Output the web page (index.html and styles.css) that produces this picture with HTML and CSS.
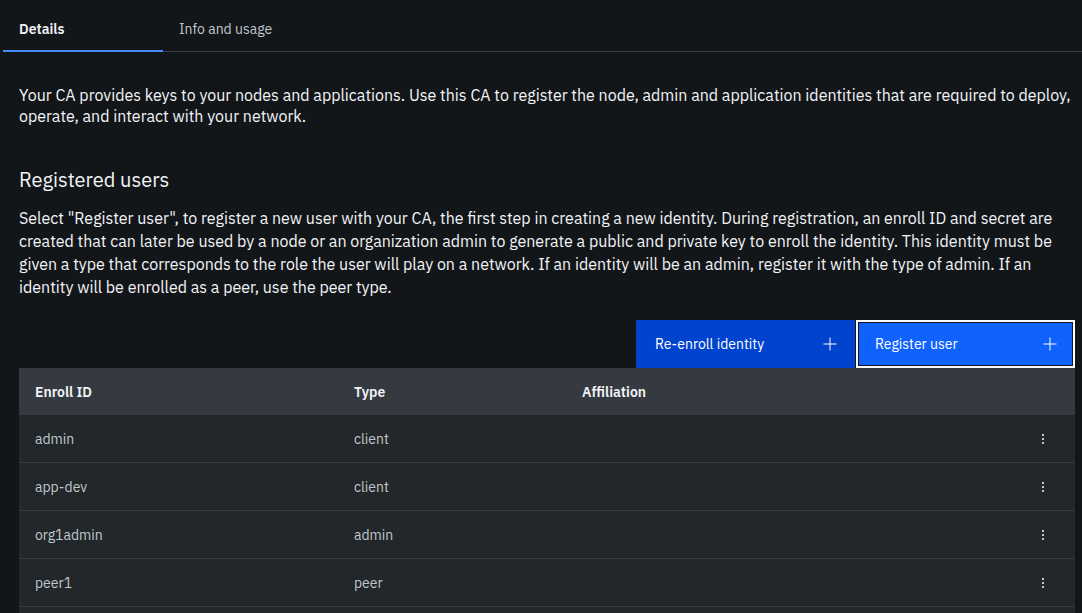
FILE: index.html
```html
<!DOCTYPE html>
<html lang="en">
<head>
<meta charset="utf-8">
<title>CA details</title>
<link rel="stylesheet" href="styles.css">
</head>
<body>
<div class="page">
  <nav class="tabs">
    <div class="tab tab-active">Details</div>
    <div class="tab">Info and usage</div>
    <div class="tab-rest"></div>
  </nav>
  <main class="content">
    <p class="intro">Your CA provides keys to your nodes and applications. Use this CA to register the node, admin and application identities that are required to deploy, operate, and interact with your network.</p>
    <h2 class="section-title">Registered users</h2>
    <p class="desc">Select "Register user", to register a new user with your CA, the first step in creating a new identity. During registration, an enroll ID and secret are created that can later be used by a node or an organization admin to generate a public and private key to enroll the identity. This identity must be given a type that corresponds to the role the user will play on a network. If an identity will be an admin, register it with the type of admin. If an identity will be enrolled as a peer, use the peer type.</p>
    <div class="toolbar">
      <button class="btn btn-secondary">Re-enroll identity
        <svg class="plus" viewBox="0 0 16 16" width="16" height="16"><path d="M8.5 1.5v6h6v1h-6v6h-1v-6h-6v-1h6v-6z" fill="currentColor"/></svg>
      </button>
      <button class="btn btn-primary">Register user
        <svg class="plus" viewBox="0 0 16 16" width="16" height="16"><path d="M8.5 1.5v6h6v1h-6v6h-1v-6h-6v-1h6v-6z" fill="currentColor"/></svg>
      </button>
    </div>
    <div class="table">
      <div class="row head">
        <div class="cell">Enroll ID</div>
        <div class="cell">Type</div>
        <div class="cell">Affiliation</div>
        <div class="cell"></div>
      </div>
      <div class="row">
        <div class="cell">admin</div><div class="cell">client</div><div class="cell"></div>
        <div class="cell menu"><span class="dots"><i></i><i></i><i></i></span></div>
      </div>
      <div class="row">
        <div class="cell">app-dev</div><div class="cell">client</div><div class="cell"></div>
        <div class="cell menu"><span class="dots"><i></i><i></i><i></i></span></div>
      </div>
      <div class="row">
        <div class="cell">org1admin</div><div class="cell">admin</div><div class="cell"></div>
        <div class="cell menu"><span class="dots"><i></i><i></i><i></i></span></div>
      </div>
      <div class="row">
        <div class="cell">peer1</div><div class="cell">peer</div><div class="cell"></div>
        <div class="cell menu"><span class="dots"><i></i><i></i><i></i></span></div>
      </div>
      <div class="row row-tail"></div>
    </div>
  </main>
</div>
</body>
</html>
```

FILE: styles.css
```css
html, body {
  margin: 0;
  padding: 0;
  background: #121619;
  height: 100%;
  overflow: hidden;
}
body {
  font-family: "IBM Plex Sans", Roboto, "Noto Sans", sans-serif;
  color: #f2f4f8;
}
.page {
  padding-left: 3px;
}
.tabs {
  display: flex;
  height: 51px;
  border-bottom: 1px solid #393f44;
  box-sizing: content-box;
}
.tab {
  width: 160px;
  box-sizing: border-box;
  padding: 20px 16px 0;
  font-size: 14px;
  line-height: 18px;
  color: #c1c7cd;
  border-bottom: 2px solid transparent;
  margin-bottom: -1px;
}
.tab-active {
  color: #f2f4f8;
  font-weight: 600;
  border-bottom-color: #4589ff;
}
.tab-rest { flex: 1; }
.content {
  padding: 0 7px 0 16px;
}
.intro {
  margin: 33px 0 0;
  font-size: 16px;
  line-height: 21px;
}
.section-title {
  margin: 40px 0 0;
  font-size: 20px;
  font-weight: 400;
  line-height: 26px;
}
.desc {
  margin: 14px 0 0;
  font-size: 16px;
  line-height: 23px;
}
.toolbar {
  display: flex;
  justify-content: flex-end;
  gap: 1px;
  margin-top: 21px;
}
.btn {
  width: 219px;
  height: 48px;
  box-sizing: border-box;
  display: flex;
  align-items: center;
  justify-content: space-between;
  padding: 0 17px 0 19px;
  border: none;
  font-family: inherit;
  font-size: 14px;
  color: #ffffff;
  text-align: left;
}
.btn-secondary {
  background: #0043ce;
}
.btn-primary {
  background: #0f62fe;
  outline: 2px solid #ffffff;
  outline-offset: -2px;
  box-shadow: inset 0 0 0 3px #121619;
}
.plus { flex: none; }
.table {
  display: flex;
  flex-direction: column;
}
.row {
  display: grid;
  grid-template-columns: 319px 228px 1fr 64px;
  height: 48px;
  flex: none;
  align-items: center;
  background: #21272a;
  border-bottom: 1px solid #343a3f;
  box-sizing: border-box;
  font-size: 14px;
  color: #c1c7cd;
}
.row.head {
  background: #343a3f;
  border-bottom: none;
  height: 47px;
  color: #f2f4f8;
  font-weight: 600;
}
.cell {
  padding-left: 16px;
}
.menu {
  padding: 0;
  display: flex;
  justify-content: center;
}
.dots {
  display: flex;
  flex-direction: column;
  gap: 2px;
}
.dots i {
  display: block;
  width: 2px;
  height: 2px;
  background: #c1c7cd;
}
```
